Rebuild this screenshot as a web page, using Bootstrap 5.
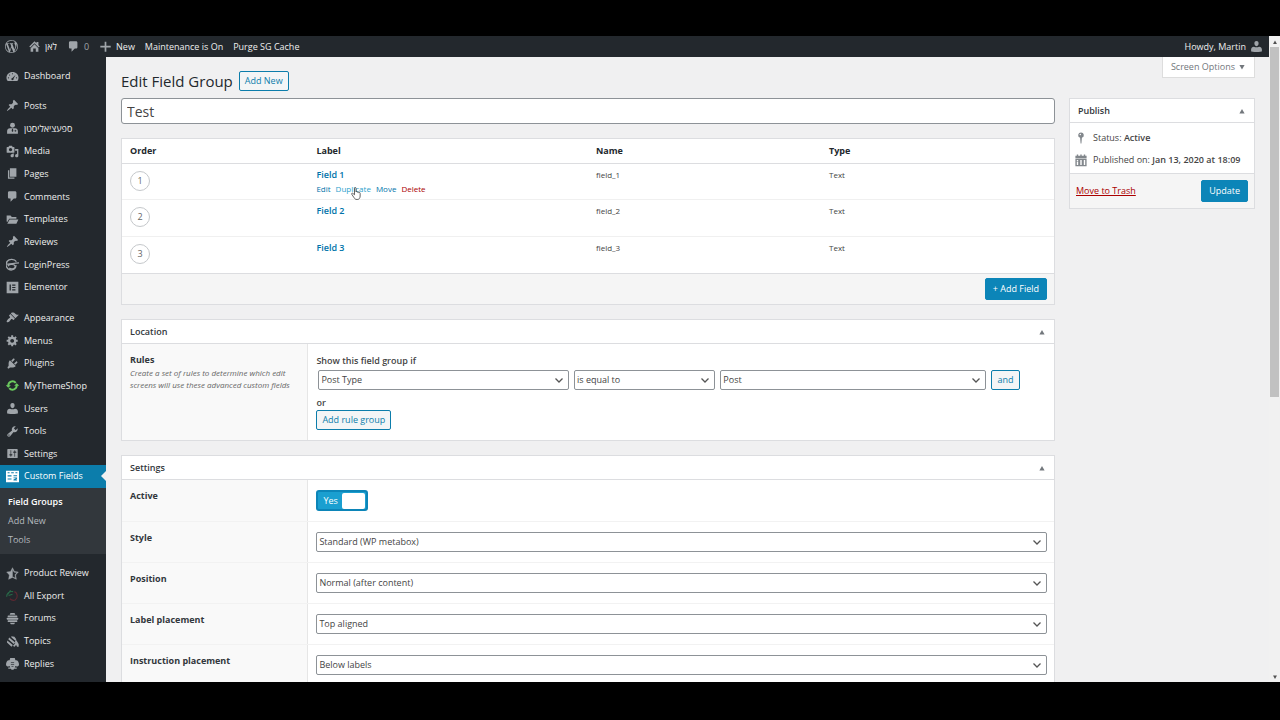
<!DOCTYPE html>
<html lang="en">
<head>
<meta charset="utf-8">
<meta name="viewport" content="width=device-width, initial-scale=1">
<title>Edit Field Group</title>
<link href="https://cdn.jsdelivr.net/npm/bootstrap@5.3.0/dist/css/bootstrap.min.css" rel="stylesheet">
<style>
  body { font: 9px/14px "Open Sans", "Noto Sans", "DejaVu Sans", sans-serif; color: #444; background: #000; height: 100vh; padding: 36px 0 38px; overflow: hidden; }
  a { text-decoration: none; color: #0073aa; }
  svg { display: block; fill: currentColor; flex: none; }
  .ico { width: 13px; height: 13px; }
  .viewport { background: #f0f0f1; }

  .adminbar { background: #23282d; color: #eee; height: 21px; padding: 0 6px 0 5px; gap: 10px; }
  .adminbar a { color: #eee; }
  .adminbar svg, .adminbar .count { color: #a0a5aa; }

  .side-menu { width: 106px; background: #23282d; padding: 8px 0 7px; }
  .side-menu .item { flex: 1 0 22px; max-height: 23px; display: flex; align-items: center; gap: 5px; padding-left: 6px; color: #eee; white-space: nowrap; }
  .side-menu .item svg { color: #a0a5aa; }
  .side-menu .gap-line { flex: none; height: 8px; }
  .side-menu .gap-line.short { height: 7px; }
  .side-menu .item.current { background: #0c7dab; color: #fff; position: relative; }
  .side-menu .item.current svg { color: #fff; }
  .side-menu .item.current::after { content: ""; position: absolute; right: 0; top: 50%; margin-top: -5px; border: 5px solid transparent; border-right-color: #f0f0f1; border-left: 0; }
  .submenu { flex: none; height: 66px; background: #32373c; padding: 4px 8px; }
  .submenu a { display: block; line-height: 19px; color: #b4b9be; }
  .submenu a.on { color: #fff; font-weight: 600; }

  .scroll-rail { width: 11px; background: #f1f1f1; padding: 0 1px; }
  .scroll-rail .arrow { height: 11px; color: #505050; }
  .scroll-rail .thumb { height: 350px; background: #c1c1c1; }

  main { padding: 0 14px 0 15px; }
  .page-head { height: 41px; }
  .page-title { padding-top: 13px; gap: 6px; }
  h1 { font-size: 15px; line-height: 22px; font-weight: 400; color: #23282d; margin: 0; }
  .wp-btn { font-size: 9px; line-height: 14px; padding: 2px 5px; border: 1px solid #0c7dab; border-radius: 2px; background: #f3f5f6; color: #0c7dab; white-space: nowrap; }
  .wp-btn.solid { background: #0c85b8; border-color: #0c85b8; color: #fff; padding: 3px 7px; }
  .screen-opts { background: #fff; border: 1px solid #ddd; border-top: 0; color: #72777c; height: 21px; padding: 0 8px; font-size: 9px; gap: 3px; }
  .title-box { height: 26px; border: 1px solid #8d9297; border-radius: 3px; padding: 0 5px; font-size: 14px; color: #444; line-height: 20px; }

  .cols { gap: 14px; }
  .side-col { width: 186px; flex: none; }
  .panel { background: #fff; border: 1px solid #dcdde0; }
  .stack { display: flex; flex-direction: column; gap: 14px; }
  .panel-head { height: 24px; padding: 0 8px; border-bottom: 1px solid #dcdde0; }
  .panel-head h2 { font-size: 9px; line-height: 14px; font-weight: 600; color: #32373c; margin: 0; }
  .panel-head button { border: 0; background: none; padding: 0; color: #72777c; }
  .panel-foot { background: #f5f5f5; border-top: 1px solid #dcdde0; padding: 4px 7px; }
  .side-col .panel-foot { padding: 6px; }

  .fields { width: 100%; table-layout: fixed; border-collapse: collapse; }
  .fields th { width: 25%; height: 24px; padding: 0 8px; font-weight: 700; color: #23282d; border-bottom: 1px solid #dcdde0; }
  .fields th:nth-child(1) { width: 20%; }
  .fields th:nth-child(2) { width: 30%; }
  .fields td { padding: 4px 8px 3px; height: 36px; vertical-align: top; border-bottom: 1px solid #f0f0f0; font-size: 8px; }
  .fields tr + tr td { height: 37px; }
  .fields tr:last-child td { border-bottom: 0; }
  .fields .field-name { font-size: 9px; font-weight: 600; }
  .order-no { width: 20px; height: 20px; border: 1px solid #c5c8cb; border-radius: 50%; margin-top: 3px; color: #666; font-size: 9px; }
  .actions { gap: 5px; line-height: 13px; }
  .actions .hovered { color: #2ea2cc; position: relative; }
  .danger-link { color: #a00; }
  .hand { position: absolute; left: 15px; top: 5px; width: 10px; height: 13px; }

  .form-row { border-bottom: 1px solid #f2f2f2; min-height: 41px; }
  .form-row .cell-label { width: 20%; background: #f9f9f9; border-right: 1px solid #e6e6e6; padding: 9px 8px; flex: none; }
  .form-row .cell-input { padding: 10px 7px 10px 8px; }
  .cell-label label, .cell-label strong { font-weight: 700; color: #32373c; display: block; }
  .wp-select { height: 20px; min-height: 0; padding: 0 18px 0 2px; font-size: 9px; line-height: 16px; color: #444; border: 1px solid #8d9297; border-radius: 2px; background-color: #fff; background-size: 10px 10px; background-position: right 4px center;
    background-image: url("data:image/svg+xml,%3Csvg xmlns='http://www.w3.org/2000/svg' viewBox='0 0 10 10'%3E%3Cpath d='M1.5 3.5 5 7l3.500-3.500' fill='none' stroke='%23555' stroke-width='1.3'/%3E%3C/svg%3E"); }
  .rule-line { display: grid; grid-template-columns: 250fr 141fr 265fr 29px; gap: 5px; padding: 0 27px 0 2px; margin: 2px 0 6px; }
  .wp-toggle { width: 52px; height: 21px; border: 2px solid #0c85b8; border-radius: 3px; background: #1a9fd0; color: #fff; padding: 0 1px 0 5px; }
  .wp-toggle .knob { width: 23px; height: 16px; background: #fff; border-radius: 2px; }
  .hint { font-style: italic; color: #666; line-height: 12px; font-size: 8px; }
  .meta { gap: 8px; padding: 8px 4px 6px; }
  .meta > div { gap: 5px; }
  .meta svg { color: #82878c; }
</style>
</head>
<body>
<svg width="0" height="0" class="position-absolute" aria-hidden="true">
  <symbol id="wp" viewBox="0 0 20 20"><path d="M20 10c0-5.51-4.49-10-10-10C4.48 0 0 4.49 0 10c0 5.52 4.48 10 10 10 5.51 0 10-4.48 10-10zM7.78 15.37L4.37 6.22c.55-.02 1.17-.08 1.17-.08.5-.06.44-1.13-.06-1.11 0 0-1.45.11-2.37.11-.18 0-.37 0-.58-.01C4.12 2.69 6.87 1.11 10 1.11c2.33 0 4.45.87 6.05 2.34-.68-.11-1.65.39-1.65 1.58 0 .74.45 1.36.9 2.1.35.61.55 1.36.55 2.46 0 1.49-1.4 5-1.4 5l-3.03-8.37c.54-.02.82-.17.82-.17.5-.05.44-1.25-.06-1.22 0 0-1.44.12-2.38.12-.87 0-2.33-.12-2.33-.12-.5-.03-.56 1.2-.06 1.22l.92.08 1.26 3.41zM17.41 10c.24-.64.74-1.87.43-4.25.7 1.29 1.05 2.71 1.05 4.25 0 3.29-1.73 6.24-4.4 7.78.97-2.59 1.94-5.2 2.92-7.78zM6.1 18.09C3.12 16.65 1.11 13.53 1.11 10c0-1.3.23-2.48.72-3.59C3.25 10.3 4.67 14.2 6.1 18.09zm4.03-6.63l2.58 6.98c-.86.29-1.76.45-2.71.45-.79 0-1.57-.11-2.29-.33.81-2.38 1.62-4.74 2.42-7.1z"/></symbol>
  <symbol id="home" viewBox="0 0 20 20"><path d="M16 8l2 2-1.500 1.500L10 5l-6.500 6.500L2 10l8-8 3 3V3h3zM10 6.500l6 6V18h-4v-5H8v5H4v-5.500z"/></symbol>
  <symbol id="comment" viewBox="0 0 20 20"><path d="M5 2h9c1.1 0 2 .9 2 2v7c0 1.1-.9 2-2 2h-2l-5 5v-5H5c-1.1 0-2-.9-2-2V4c0-1.1.9-2 2-2z"/></symbol>
  <symbol id="plus" viewBox="0 0 20 20"><path d="M18 9v2.6h-6.7V18H8.7v-6.4H2V9h6.7V2.500h2.600V9z"/></symbol>
  <symbol id="dash" viewBox="0 0 20 20"><path d="M2.500 17h15c1.200-1.370 1.800-3.110 1.800-5 0-5-4-9-9.300-9S.7 7 .7 12c0 1.890.6 3.630 1.800 5z"/><g fill="#23282d"><circle cx="10" cy="5.800" r=".9"/><circle cx="5.500" cy="7.700" r=".9"/><circle cx="3.800" cy="12" r=".9"/><circle cx="16.200" cy="12" r=".9"/><path d="M14.800 7.200l-3.200 6.200a1.700 1.700 0 1 1-1.700-1.200z"/></g></symbol>
  <symbol id="pin" viewBox="0 0 20 20"><path d="M10.440 3.020l1.820-1.820 6.360 6.350-1.830 1.820c-1.050-.68-2.480-.57-3.410.36l-.75.75c-.92.93-1.040 2.350-.35 3.410l-1.830 1.820-2.410-2.410-2.800 2.790c-.42.42-3.380 2.710-3.800 2.290s1.860-3.390 2.280-3.810l2.790-2.790L4.100 9.360l1.830-1.820c1.050.69 2.480.57 3.400-.36l.75-.75c.93-.92 1.050-2.350.36-3.410z"/></symbol>
  <symbol id="user" viewBox="0 0 20 20"><path d="M10 9.500c-2.700 0-3.200-3.700-3.200-3.700C6.500 3.800 7.500 1.700 10 1.700s3.500 2.100 3.200 4.100c0 0-.5 3.700-3.200 3.700zM6 10.300c2.500 1.300 5.500 1.300 8 0 2.500 0 4.300 2 4.300 4.300V17.500s-4 1-8.300 1-8.300-1-8.300-1v-2.900c0-2.300 1.800-4.300 4.300-4.300z"/></symbol>
  <symbol id="doctor" viewBox="0 0 20 20"><circle cx="10" cy="5" r="3.800"/><path d="M6 9.700h8c2.500 0 4.300 2 4.300 4.500v4H1.700v-4c0-2.500 1.800-4.500 4.300-4.500z"/><path d="M9.300 10.500h1.400l.6 3.500L10 15.500 8.700 14z" fill="#23282d"/><path d="M13 13.500h3M14.500 12v3" stroke="#23282d"/></symbol>
  <symbol id="media" viewBox="0 0 20 20"><path d="M13 11V4c0-.55-.45-1-1-1h-1.670L9 1H5L3.670 3H2c-.55 0-1 .45-1 1v7c0 .55.45 1 1 1h10c.55 0 1-.45 1-1zM7 4.500c1.380 0 2.500 1.120 2.500 2.500S8.380 9.500 7 9.500 4.500 8.380 4.500 7 5.620 4.500 7 4.500zM14 6h5v10.500c0 1.380-1.120 2.500-2.500 2.500S14 17.880 14 16.500s1.120-2.500 2.500-2.500c.17 0 .34.020.5.050V9h-3V6zm-4 8.050V13h2v3.500c0 1.380-1.120 2.500-2.500 2.500S7 17.880 7 16.500 8.120 14 9.500 14c.17 0 .34.020.5.050z"/></symbol>
  <symbol id="page" viewBox="0 0 20 20"><path d="M6 15V2h10v13H6zm-1 1h8v2H3V5h2v11z"/></symbol>
  <symbol id="folder" viewBox="0 0 20 20"><path d="M1 4h6l2 2h7v3H5l-3 5-1-1z"/><path d="M5.500 10H19l-3 6.500H2z"/></symbol>
  <symbol id="loginpress" viewBox="0 0 20 17"><g fill="none" stroke="currentColor" stroke-width="2"><path d="M16 4C13 0 5-.5 2 3.500S0 12 3 15s9 2.500 11.500-1.500l1-4"/><path d="M0 7.500c5 2 12-2 22-1.500M3 11c2-4 10-3.500 11 0s-5 5.500-9 3"/></g></symbol>
  <symbol id="elementor" viewBox="0 0 20 20"><path fill-rule="evenodd" d="M1 1h18v18H1zM5.500 5.500v9h2v-9zM9.500 5.500v1.700h5V5.500zM9.500 9.200v1.700h5V9.200zM9.500 12.800v1.700h5v-1.700z"/></symbol>
  <symbol id="brush" viewBox="0 0 20 20"><path d="M14.480 11.060L7.410 3.990l1.500-1.500c.5-.56 2.300-.47 3.510.32 1.210.8 1.430 1.280 2.910 2.100 1.180.64 2.450 1.260 4.450.85zm-.71.71L6.700 4.700 4.930 6.470c-.39.39-.39 1.020 0 1.410l1.060 1.060c.39.39.39 1.030 0 1.420-.6.6-1.430 1.110-2.210 1.690-.35.26-.7.53-1.010.84C1.430 14.230.4 16.080 1.400 17.070c.99 1 2.840-.03 4.180-1.360.31-.31.58-.66.85-1.020.57-.78 1.080-1.610 1.690-2.210.39-.39 1.020-.39 1.410 0l1.060 1.060c.39.39 1.020.39 1.410 0z"/></symbol>
  <symbol id="gear" viewBox="0 0 20 20"><path d="M18 12h-2.180c-.17.7-.44 1.350-.81 1.930l1.540 1.540-2.100 2.100-1.540-1.540c-.58.36-1.230.63-1.910.79V19H8v-2.180c-.68-.16-1.330-.43-1.910-.79l-1.540 1.540-2.120-2.120 1.540-1.540c-.36-.58-.63-1.230-.79-1.910H1V9.030h2.170c.16-.7.44-1.350.8-1.940L2.430 5.550l2.100-2.100 1.540 1.540c.58-.37 1.240-.64 1.930-.81V2h3v2.180c.68.16 1.330.43 1.910.79l1.540-1.540 2.120 2.120-1.540 1.540c.36.59.64 1.240.8 1.940H18V12zm-8.500 1.500c1.660 0 3-1.340 3-3s-1.340-3-3-3-3 1.340-3 3 1.340 3 3 3z"/></symbol>
  <symbol id="plug" viewBox="0 0 20 20"><path d="M13.110 4.360L9.870 7.600 8 5.730l3.240-3.240c.35-.34 1.050-.2 1.560.32.52.51.66 1.210.31 1.550zm-8 1.770l.91-1.120 9.010 9.010-1.190.84c-.71.71-2.630 1.160-3.820 1.160H6.140L4.900 17.260c-.59.59-1.540.59-2.120 0-.59-.58-.59-1.530 0-2.120l1.240-1.240v-3.880c0-1.130.4-3.190 1.090-3.890zm7.260 3.970l3.240-3.240c.34-.35 1.040-.21 1.550.31.52.51.66 1.210.31 1.550l-3.240 3.250z"/></symbol>
  <symbol id="mts" viewBox="0 0 20 20"><g fill="none" stroke="#6ccb5f" stroke-width="3"><path d="M3.500 10.500A6.500 6.500 0 0 1 15 6M16.500 9.500A6.500 6.500 0 0 1 5 14"/></g><path d="M-.5 9.500h8l-4 4zM20.500 10.500h-8l4-4z" fill="#6ccb5f"/></symbol>
  <symbol id="wrench" viewBox="0 0 20 20"><path d="M16.680 9.770c-1.340 1.340-3.300 1.670-4.950.99l-5.410 6.520c-.99.99-2.590.99-3.580 0s-.99-2.590 0-3.570l6.520-5.420c-.68-1.650-.35-3.610.99-4.950 1.280-1.280 3.120-1.620 4.720-1.060l-2.890 2.890 2.820 2.820 2.860-2.870c.53 1.580.18 3.390-1.080 4.650zM3.810 16.210c.4.39 1.040.39 1.430 0 .4-.4.4-1.040 0-1.430-.39-.4-1.030-.4-1.430 0-.39.39-.39 1.030 0 1.430z"/></symbol>
  <symbol id="sliders" viewBox="0 0 20 20"><path d="M18 16V4c0-.55-.45-1-1-1H3c-.55 0-1 .45-1 1v12c0 .55.45 1 1 1h14c.55 0 1-.45 1-1zM8 11h1c.55 0 1 .45 1 1s-.45 1-1 1H8v1.500c0 .28-.22.5-.5.5s-.5-.22-.5-.5V13H6c-.55 0-1-.45-1-1s.45-1 1-1h1V5.500c0-.28.22-.5.5-.5s.5.22.5.5V11zm5-2h-1c-.55 0-1-.45-1-1s.45-1 1-1h1V5.500c0-.28.22-.5.5-.5s.5.22.5.5V7h1c.55 0 1 .45 1 1s-.45 1-1 1h-1v5.500c0 .28-.22.5-.5.5s-.5-.22-.5-.5V9z"/></symbol>
  <symbol id="acf" viewBox="0 0 20 20"><path fill-rule="evenodd" d="M0 1h20v18H0zM2.500 3.500V5h3V3.500zM8 3.500V5h4V3.500zM14.500 3.500V5h3V3.500zM2.500 8v2h6V8zM11.500 8v1.500H17V8zM2.500 13v1.500h6V13zM11.500 11.500v1.300h4l-4 2v1.200H17v-1.200h-2l2-1.200v-2.100z"/></symbol>
  <symbol id="star" viewBox="0 0 20 20"><path d="M10 1L7 7l-6 .75 4.130 4.620L4 19l6-3 6 3-1.120-6.630L19 7.750 13 7zm0 2.240l2.340 4.690 4.650.58-3.180 3.560.87 5.150L10 14.880z" stroke="currentColor" stroke-width=".6"/></symbol>
  <symbol id="export" viewBox="0 0 20 20"><g fill="none" stroke-width="1.800"><path d="M11 4C5 3 1 7 1 12M7 2L3 8M10 8l-6 2" stroke="#286848"/><path d="M13 4c5 2 6 9 1 13-3 1-6 0-8-2" stroke="#5d2831"/></g></symbol>
  <symbol id="hive" viewBox="0 0 20 20"><path d="M7 1.500h6l1.500 2.700h-9zM3.500 5.200h13c1.400 0 1.400 2.800 0 2.800h-13c-1.400 0-1.400-2.800 0-2.800zM2 9h16c1.400 0 1.400 2.800 0 2.800H2C.6 11.800.6 9 2 9zM3.500 12.800h13c1.400 0 1.400 2.700 0 2.700h-13c-1.400 0-1.400-2.700 0-2.700zM6 16.500h8l-1.500 2.300h-5z"/></symbol>
  <symbol id="bees" viewBox="0 0 20 20"><path d="M8 2l5 .5 3 4.500-2 1.500L8.500 4zM5 4l9 7.500-2 2.500-8.500-7.500zM2 8.500l8.500 7-2 2.500-7-6.500zM14 8.500l2-.5 3.500 6v4h-2.500l-1.500-3-2 3-3-1 3.500-4z"/></symbol>
  <symbol id="bee" viewBox="0 0 20 20"><path d="M6.500 1.500h7l1 3.500c3-1 5.500 2.500 5.500 6.500 0 3-4 4-5.500 2.500l-1 2h3v2h-4l-1 1.500h-3L7.500 18h-4v-2h3l-1-2C4 15.500 0 14.500 0 11.500 0 7.500 2.500 4 5.500 5z"/><path d="M7.500 8.500h5M7.500 11.500h5M8.500 14.500h3" stroke="#23282d" stroke-width="1"/></symbol>
  <symbol id="up" viewBox="0 0 8 8"><path d="M4 2L6.600 6.500H1.400z"/></symbol>
  <symbol id="down" viewBox="0 0 8 8"><path d="M4 6.500L6.600 2H1.400z"/></symbol>
</svg>

<div class="viewport h-100 d-flex overflow-hidden">
  <div class="flex-grow-1 d-flex flex-column overflow-hidden">
    <header class="adminbar d-flex align-items-center flex-shrink-0">
      <a href="#" aria-label="WordPress"><svg class="ico"><use href="#wp"/></svg></a>
      <a href="#" class="d-flex align-items-center gap-1"><svg class="ico"><use href="#home"/></svg><span lang="yi" dir="rtl">לאן</span></a>
      <a href="#" class="d-flex align-items-center gap-1"><svg class="ico"><use href="#comment"/></svg><span class="count">0</span></a>
      <a href="#" class="d-flex align-items-center gap-1"><svg class="ico"><use href="#plus"/></svg>New</a>
      <a href="#">Maintenance is On</a>
      <a href="#">Purge SG Cache</a>
      <a href="#" class="ms-auto d-flex align-items-center gap-1">Howdy, Martin<svg class="ico"><use href="#user"/></svg></a>
    </header>

    <div class="d-flex flex-grow-1 overflow-hidden">
      <nav class="side-menu d-flex flex-column flex-shrink-0">
        <a href="#" class="item"><svg class="ico"><use href="#dash"/></svg>Dashboard</a>
        <div class="gap-line short"></div>
        <a href="#" class="item"><svg class="ico"><use href="#pin"/></svg>Posts</a>
        <a href="#" class="item"><svg class="ico"><use href="#doctor"/></svg><span lang="yi" dir="rtl">ספעציאליסטן</span></a>
        <a href="#" class="item"><svg class="ico"><use href="#media"/></svg>Media</a>
        <a href="#" class="item"><svg class="ico"><use href="#page"/></svg>Pages</a>
        <a href="#" class="item"><svg class="ico"><use href="#comment"/></svg>Comments</a>
        <a href="#" class="item"><svg class="ico"><use href="#folder"/></svg>Templates</a>
        <a href="#" class="item"><svg class="ico"><use href="#pin"/></svg>Reviews</a>
        <a href="#" class="item"><svg class="ico"><use href="#loginpress"/></svg>LoginPress</a>
        <a href="#" class="item"><svg class="ico"><use href="#elementor"/></svg>Elementor</a>
        <div class="gap-line"></div>
        <a href="#" class="item"><svg class="ico"><use href="#brush"/></svg>Appearance</a>
        <a href="#" class="item"><svg class="ico"><use href="#gear"/></svg>Menus</a>
        <a href="#" class="item"><svg class="ico"><use href="#plug"/></svg>Plugins</a>
        <a href="#" class="item"><svg class="ico"><use href="#mts"/></svg>MyThemeShop</a>
        <a href="#" class="item"><svg class="ico"><use href="#user"/></svg>Users</a>
        <a href="#" class="item"><svg class="ico"><use href="#wrench"/></svg>Tools</a>
        <a href="#" class="item"><svg class="ico"><use href="#sliders"/></svg>Settings</a>
        <a href="#" class="item current"><svg class="ico"><use href="#acf"/></svg>Custom Fields</a>
        <div class="submenu">
          <a href="#" class="on">Field Groups</a>
          <a href="#">Add New</a>
          <a href="#">Tools</a>
        </div>
        <div class="gap-line"></div>
        <a href="#" class="item"><svg class="ico"><use href="#star"/></svg>Product Review</a>
        <a href="#" class="item"><svg class="ico"><use href="#export"/></svg>All Export</a>
        <a href="#" class="item"><svg class="ico"><use href="#hive"/></svg>Forums</a>
        <a href="#" class="item"><svg class="ico"><use href="#bees"/></svg>Topics</a>
        <a href="#" class="item"><svg class="ico"><use href="#bee"/></svg>Replies</a>
      </nav>

      <main class="flex-grow-1 overflow-hidden">
        <div class="page-head d-flex justify-content-between align-items-start">
          <div class="page-title d-flex align-items-center">
            <h1>Edit Field Group</h1>
            <a href="#" class="wp-btn">Add New</a>
          </div>
          <button type="button" class="screen-opts d-flex align-items-center">Screen Options <svg width="8" height="8"><use href="#down"/></svg></button>
        </div>

        <div class="cols d-flex align-items-start">
          <div class="flex-grow-1 stack">
            <input type="text" class="title-box form-control" value="Test" aria-label="Title">

            <section class="panel">
              <table class="fields">
                <thead><tr><th>Order</th><th>Label</th><th>Name</th><th>Type</th></tr></thead>
                <tbody>
                  <tr>
                    <td><span class="order-no d-flex align-items-center justify-content-center">1</span></td>
                    <td>
                      <a href="#" class="field-name d-block">Field 1</a>
                      <div class="actions d-flex"><a href="#">Edit</a><a href="#" class="hovered">Duplicate<svg class="hand" viewBox="0 0 20 26"><path d="M7 2.500c0-2 3-2 3 0V10c.5-1.500 2.800-1 2.800.5.800-1.200 2.700-.6 2.700.9.800-1 2.800-.5 2.800 1.100V18c0 4-2 7-6 7-3.500 0-5-1.500-6.500-4l-4.300-6.500c-1-1.800 1.200-3 2.500-1.500L7 15.500z" fill="#fff" stroke="#333" stroke-width="1.500"/></svg></a><a href="#">Move</a><a href="#" class="danger-link">Delete</a></div>
                    </td>
                    <td>field_1</td><td>Text</td>
                  </tr>
                  <tr><td><span class="order-no d-flex align-items-center justify-content-center">2</span></td><td><a href="#" class="field-name">Field 2</a></td><td>field_2</td><td>Text</td></tr>
                  <tr><td><span class="order-no d-flex align-items-center justify-content-center">3</span></td><td><a href="#" class="field-name">Field 3</a></td><td>field_3</td><td>Text</td></tr>
                </tbody>
              </table>
              <div class="panel-foot d-flex justify-content-end"><button type="button" class="wp-btn solid">+ Add Field</button></div>
            </section>

            <section class="panel">
              <div class="panel-head d-flex justify-content-between align-items-center"><h2>Location</h2><button type="button" aria-label="Toggle panel"><svg width="8" height="8"><use href="#up"/></svg></button></div>
              <div class="form-row d-flex border-0">
                <div class="cell-label"><strong>Rules</strong><span class="hint d-block">Create a set of rules to determine which edit screens will use these advanced custom fields</span></div>
                <div class="cell-input flex-grow-1">
                  <div class="fw-semibold">Show this field group if</div>
                  <div class="rule-line">
                    <select class="form-select wp-select" aria-label="Parameter"><option>Post Type</option></select>
                    <select class="form-select wp-select" aria-label="Operator"><option>is equal to</option></select>
                    <select class="form-select wp-select" aria-label="Value"><option>Post</option></select>
                    <button type="button" class="wp-btn">and</button>
                  </div>
                  <div class="fw-semibold">or</div>
                  <button type="button" class="wp-btn">Add rule group</button>
                </div>
              </div>
            </section>

            <section class="panel">
              <div class="panel-head d-flex justify-content-between align-items-center"><h2>Settings</h2><button type="button" aria-label="Toggle panel"><svg width="8" height="8"><use href="#up"/></svg></button></div>
              <div class="form-row d-flex">
                <div class="cell-label"><strong>Active</strong></div>
                <div class="cell-input flex-grow-1">
                  <input type="checkbox" class="btn-check" id="active" checked>
                  <label for="active" class="wp-toggle d-flex align-items-center justify-content-between">Yes<span class="knob"></span></label>
                </div>
              </div>
              <div class="form-row d-flex">
                <div class="cell-label"><label for="style">Style</label></div>
                <div class="cell-input flex-grow-1"><select id="style" class="form-select wp-select"><option>Standard (WP metabox)</option></select></div>
              </div>
              <div class="form-row d-flex">
                <div class="cell-label"><label for="position">Position</label></div>
                <div class="cell-input flex-grow-1"><select id="position" class="form-select wp-select"><option>Normal (after content)</option></select></div>
              </div>
              <div class="form-row d-flex">
                <div class="cell-label"><label for="labels">Label placement</label></div>
                <div class="cell-input flex-grow-1"><select id="labels" class="form-select wp-select"><option>Top aligned</option></select></div>
              </div>
              <div class="form-row d-flex">
                <div class="cell-label"><label for="instructions">Instruction placement</label></div>
                <div class="cell-input flex-grow-1"><select id="instructions" class="form-select wp-select"><option>Below labels</option></select></div>
              </div>
            </section>
          </div>

          <aside class="side-col panel">
            <div class="panel-head d-flex justify-content-between align-items-center"><h2>Publish</h2><button type="button" aria-label="Toggle panel"><svg width="8" height="8"><use href="#up"/></svg></button></div>
            <div class="meta d-flex flex-column">
              <div class="d-flex align-items-center"><svg width="14" height="14" viewBox="0 0 20 20"><path d="M10 2a4 4 0 0 1 1.300 7.800L10.600 18H9.400l-.7-8.200A4 4 0 0 1 10 2z"/><circle cx="9" cy="5" r="1" fill="#fff"/></svg><span>Status: <b class="fw-semibold">Active</b></span></div>
              <div class="d-flex align-items-center"><svg width="14" height="14" viewBox="0 0 20 20"><path fill-rule="evenodd" d="M2 4h2V2h2v2h3V2h2v2h3V2h2v2h2v3H2zM2 8h16v11H2zM4 10v2h2v-2zM9 10v7h2v-7zM14 10v7h2v-7zM4 13v4h2v-4z"/></svg><span>Published on: <b class="fw-semibold">Jan 13, 2020 at 18:09</b></span></div>
            </div>
            <div class="panel-foot d-flex justify-content-between align-items-center"><a href="#" class="danger-link text-decoration-underline">Move to Trash</a><button type="button" class="wp-btn solid">Update</button></div>
          </aside>
        </div>
      </main>
    </div>
  </div>

  <div class="scroll-rail d-flex flex-column flex-shrink-0" aria-hidden="true">
    <div class="arrow d-flex align-items-center justify-content-center"><svg width="6" height="6"><use href="#up"/></svg></div>
    <div class="thumb"></div>
    <div class="arrow mt-auto d-flex align-items-center justify-content-center"><svg width="6" height="6"><use href="#down"/></svg></div>
  </div>
</div>
<script src="https://cdn.jsdelivr.net/npm/bootstrap@5.3.0/dist/js/bootstrap.bundle.min.js"></script>
</body>
</html>
